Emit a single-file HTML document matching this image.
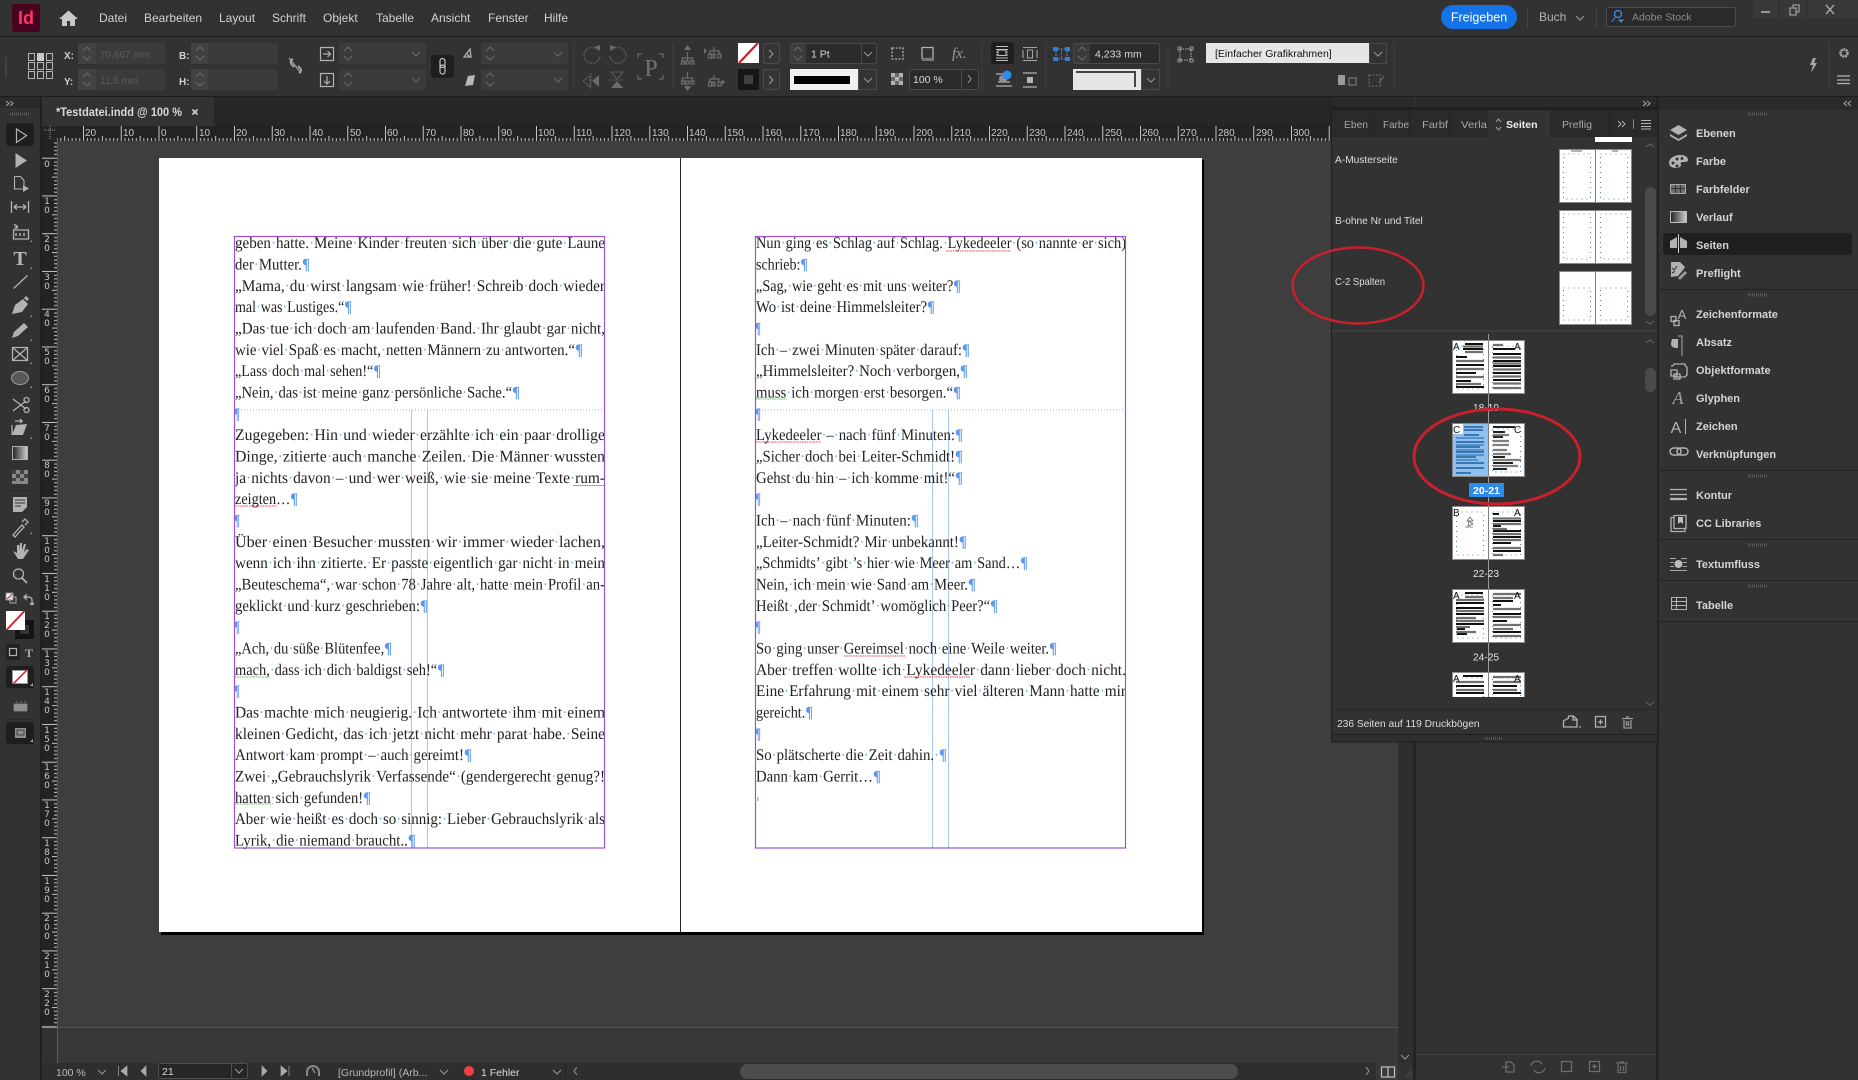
<!DOCTYPE html>
<html lang="de"><head><meta charset="utf-8"><title>InDesign</title>
<style>
html,body{margin:0;padding:0;background:#323232;overflow:hidden}
svg{display:block;font-family:"Liberation Sans",sans-serif}
.m{font-size:12px;fill:#d0d0d0}
.v{font-size:10.5px;fill:#d8d8d8}
.dim{font-size:10px;fill:#5c5c5c}
.lab{font-size:10px;fill:#cfcfcf;font-weight:bold}
.rh{font-size:10px;fill:#c8c8c8}
.rv{font-family:"DejaVu Sans",sans-serif;font-size:9px;fill:#c8c8c8;text-anchor:middle}
.dk{font-size:11px;font-weight:bold;fill:#d4d4d4}
.pn{font-size:10.2px;fill:#dedede}
.tb{font-size:10.5px;fill:#a8a8a8}
.tb.act{fill:#eee;font-weight:bold}
.tl{font-size:10.2px;fill:#e4e4e4;text-anchor:middle}
.bk{font-family:"Liberation Serif",serif;font-size:16.2px;fill:#222;text-rendering:geometricPrecision}
.d{fill:#7fb0e8}
.p{fill:#5b98ee;font-weight:bold}
.ic{fill:none;stroke:#b2b2b2;stroke-width:1.3}
.if{fill:#b2b2b2}
.di{fill:none;stroke:#666;stroke-width:1.2}
.cv{fill:none;stroke:#9a9a9a;stroke-width:1}
.ltr{font-family:"Liberation Sans",sans-serif;font-size:10px;fill:#111}
</style></head><body>
<svg xmlns="http://www.w3.org/2000/svg" width="1858" height="1080" viewBox="0 0 1858 1080">
<defs>
<path id="cv" class="cv" d="M0 0l4 4 4-4"/>
<path id="cu" class="di" d="M0 4l4-4 4 4"/>
<path id="cd" class="di" d="M0 0l4 4 4-4"/>
<pattern id="hr" patternUnits="userSpaceOnUse" x="158.5" y="126" width="37.75" height="15">
<path d="M.5 0v15M4.3 12v3M8 12v3M11.8 12v3M15.6 12v3M19.4 10v5M23.1 12v3M26.9 12v3M30.7 12v3M34.5 12v3" stroke="#c4c4c4" stroke-width="1" fill="none"/></pattern>
<pattern id="vr" patternUnits="userSpaceOnUse" x="42" y="157.7" width="15" height="37.75">
<path d="M0 .5h15M12 4.3h3M12 8h3M12 11.8h3M12 15.6h3M10 19.4h5M12 23.1h3M12 26.9h3M12 30.7h3M12 34.5h3" stroke="#c4c4c4" stroke-width="1" fill="none"/></pattern>
<g id="spr"><rect x=".5" y=".5" width="72" height="53" fill="#fff" stroke="#8a8a8a"/><path d="M36.5 0v54" stroke="#808080"/><path d="M4.5 6h27v43h-27zM40.5 6h28v43h-28z" fill="none" stroke="#5c88a8" stroke-dasharray="1 4"/></g>
<g id="mst"><rect x=".5" y=".5" width="72" height="53" fill="#fff" stroke="#8a8a8a"/><path d="M36.5 0v54" stroke="#808080"/></g>
</defs>

<rect width="1858" height="1080" fill="#323232"/>

<!-- menu bar -->
<rect x="0" y="36" width="1858" height="1" fill="#1d1d1d"/>
<rect x="12" y="4" width="28" height="28" rx="3" fill="#49021f"/>
<text x="18" y="24" style="font-size:18px;font-weight:bold;fill:#ff3366" textLength="16" lengthAdjust="spacingAndGlyphs">Id</text>
<path d="M68.5 10.5L59 19h3v7h5v-5h3v5h5v-7h3z" fill="#c8c8c8"/>
<text class="m" x="99" y="22">Datei</text><text class="m" x="144" y="22">Bearbeiten</text><text class="m" x="219" y="22">Layout</text><text class="m" x="272" y="22">Schrift</text><text class="m" x="323" y="22">Objekt</text><text class="m" x="376" y="22">Tabelle</text><text class="m" x="431" y="22">Ansicht</text><text class="m" x="488" y="22">Fenster</text><text class="m" x="544" y="22">Hilfe</text>
<rect x="1441" y="5" width="76" height="24" rx="12" fill="#1473e6"/>
<text x="1479" y="21.5" text-anchor="middle" style="font-size:12.5px;fill:#fff">Freigeben</text>
<rect x="1527" y="8" width="1" height="20" fill="#444"/>
<text class="m" x="1539" y="21" style="fill:#b4b4b4">Buch</text><use href="#cv" x="1576" y="16"/>
<rect x="1596" y="8" width="1" height="20" fill="#444"/>
<rect x="1606.5" y="7.5" width="129" height="19" rx="2" fill="#2a2a2a" stroke="#4c4c4c"/>
<circle cx="1618" cy="14" r="3.500" fill="none" stroke="#3d8fe8" stroke-width="1.300"/><path d="M1615.500 17l-4 5M1619 20h4l-2 2z" stroke="#3d8fe8" fill="#3d8fe8"/>
<text x="1632" y="20.5" style="font-size:10.5px;fill:#8a8a8a">Adobe Stock</text>
<rect x="1753" y="0" width="105" height="18" fill="#383838"/><path d="M1779 0v18M1807 0v18" stroke="#2e2e2e"/>
<rect x="1761" y="11" width="9" height="2" fill="#9a9a9a"/>
<path d="M1790 8h6v7h-6zM1793 8V5h6v7h-3" fill="none" stroke="#9a9a9a" stroke-width="1.3"/>
<path d="M1826 5l8 9M1834 5l-8 9" stroke="#a8a8a8" stroke-width="1.4"/>

<!-- control panel -->
<rect x="0" y="96" width="1858" height="1" fill="#1d1d1d"/>
<path d="M6 57v20" stroke="#555" stroke-width="2" stroke-dasharray="1 1.4"/>
<g fill="none" stroke="#b4b4b4" stroke-width="1"><path d="M28.5 53.5h6v7h-6zM37.5 53.5h6v7h-6zM46.5 53.5h6v7h-6zM28.5 62.5h6v7h-6zM37.5 62.5h6v7h-6zM46.5 62.5h6v7h-6zM28.5 71.5h6v7h-6zM37.5 71.5h6v7h-6zM46.5 71.5h6v7h-6z"/></g><rect x="37" y="53" width="7" height="8" fill="#c8c8c8"/>
<text class="lab" x="64" y="59">X:</text><text class="lab" x="64" y="85">Y:</text><text class="lab" x="179" y="59">B:</text><text class="lab" x="179" y="85">H:</text>
<g fill="#3b3b3b"><rect x="78" y="43" width="87" height="21" rx="2"/><rect x="78" y="69" width="87" height="21" rx="2"/><rect x="191" y="43" width="87" height="21" rx="2"/><rect x="191" y="69" width="87" height="21" rx="2"/><rect x="339" y="43" width="87" height="21" rx="2"/><rect x="339" y="69" width="87" height="21" rx="2"/><rect x="481" y="43" width="87" height="21" rx="2"/><rect x="481" y="69" width="87" height="21" rx="2"/></g>
<g fill="#424242"><rect x="78" y="43" width="18" height="21"/><rect x="78" y="69" width="18" height="21"/><rect x="191" y="43" width="17" height="21"/><rect x="191" y="69" width="17" height="21"/></g>
<use href="#cu" x="83" y="47"/><use href="#cd" x="83" y="56"/><use href="#cu" x="83" y="73"/><use href="#cd" x="83" y="82"/>
<use href="#cu" x="196" y="47"/><use href="#cd" x="196" y="56"/><use href="#cu" x="196" y="73"/><use href="#cd" x="196" y="82"/>
<use href="#cu" x="344" y="47"/><use href="#cd" x="344" y="56"/><use href="#cu" x="344" y="73"/><use href="#cd" x="344" y="82"/>
<use href="#cu" x="486" y="47"/><use href="#cd" x="486" y="56"/><use href="#cu" x="486" y="73"/><use href="#cd" x="486" y="82"/>
<use href="#cd" x="412" y="52"/><use href="#cd" x="412" y="78"/><use href="#cd" x="554" y="52"/><use href="#cd" x="554" y="78"/>
<text class="dim" x="100" y="58">70,667 mm</text><text class="dim" x="100" y="84">11,5 mm</text>
<path d="M289 58l12 15" stroke="#a8a8a8" stroke-width="1.200"/><path d="M293 59c-3 1-3 4-1 6l2 2M298 66l2 2c2 2 1 4-1 5" fill="none" stroke="#a8a8a8" stroke-width="1.800"/>
<path class="ic" d="M320.5 47.5h13v13h-13zM323 54h7M327.5 51l3 3-3 3" style="stroke-width:1.2"/><path class="ic" d="M320.5 73.5h13v13h-13zM327 76v7M324 81l3 3 3-3" style="stroke-width:1.2"/>
<rect x="431" y="55" width="23" height="23" rx="3" fill="#1e1e1e"/><rect x="440" y="58.500" width="5" height="9" rx="2.500" fill="none" stroke="#c4c4c4" stroke-width="1.200"/><rect x="440" y="65" width="5" height="9" rx="2.500" fill="none" stroke="#c4c4c4" stroke-width="1.200"/>
<path class="ic" d="M464 57l6-8 1 8zM467 54l3 3"/><path d="M465 86l3-10 7-1-2 10z" fill="#b8b8b8"/>
<path d="M574 43v46M673 43v46M982 43v46M1046 43v46M1168 43v46M1394 43v46M1829 42v48" stroke="#404040"/>
<g fill="none" stroke="#5a5a5a" stroke-width="1.500"><path d="M598 50a8 8 0 1 0 2 6" stroke-dasharray="2 1"/><path d="M612 50a8 8 0 1 1-2 6" stroke-dasharray="2 1"/></g>
<path d="M594 47l6-2v6zM616 47l-6-2v6z" fill="#6a6a6a"/>
<path d="M590 76l-7 5 7 6z" fill="none" stroke="#5a5a5a"/><path d="M592 81l7-6v12z" fill="#6a6a6a"/><path d="M591 73v16" stroke="#5a5a5a" stroke-dasharray="2 1"/>
<path d="M611 72h12l-6 7z" fill="none" stroke="#5a5a5a"/><path d="M611 88h12l-6-7z" fill="#6a6a6a"/><path d="M609 80h16" stroke="#5a5a5a" stroke-dasharray="2 1"/>
<text x="651" y="76" text-anchor="middle" style="font-family:'Liberation Serif',serif;font-size:24px;fill:#707070">P</text>
<path d="M638 58v-4h4M659 54h4v4M638 75v4h4M659 79h4v-4" fill="none" stroke="#777"/>
<g class="di" style="stroke:#6e6e6e"><path d="M687.5 52v6M687.5 58h-5v3M687.5 58h5v3M687.5 58v3M681.5 61h3v3h-3zM686 61h3v3h-3zM691 61h3v3h-3z"/><path d="M714 47v4M714 51h-4v3M714 51h5v3M708.500 54h3v4h-3zM713 54h2v4h-2zM718 54h3v4h-3z"/><path d="M687.500 72v6M687.500 78h-5v3M687.500 78h5v3M681.500 81h3v3h-3zM686 81h3v3h-3zM691 81h3v3h-3z"/><path d="M714 75v4M714 79h-4v3M714 79h5v3M708.500 82h3v4h-3zM713 82h2v4h-2zM718 82h3v4h-3z"/></g>
<path d="M684 50l3.500-5 3.500 5zM684 86l3.500 5 3.500-5z M707 51l-3-3v6zM722 79l3 3-3 3z" fill="#6e6e6e"/>
<rect x="738" y="43" width="21" height="20" fill="#fff"/><path d="M739 63l19-20" stroke="#d01c24" stroke-width="2.2"/>
<rect x="763.500" y="43.500" width="16" height="20" rx="2" fill="#353535" stroke="#4c4c4c"/><path d="M769 50l4 4-4 4" class="cv"/>
<rect x="738" y="69" width="21" height="21" fill="#161616"/><rect x="744" y="75" width="9" height="9" fill="#404040"/>
<rect x="763.500" y="69.500" width="16" height="20" rx="2" fill="#353535" stroke="#4c4c4c"/><path d="M769 76l4 4-4 4" class="cv"/>
<rect x="790.500" y="43.500" width="86" height="20" rx="2" fill="#2b2b2b" stroke="#4a4a4a"/><rect x="791" y="44" width="15" height="19" fill="#3c3c3c"/><use href="#cu" x="794" y="47" /><use href="#cd" x="794" y="56"/><text class="v" x="811" y="57.500">1 Pt</text><path d="M861.500 44v19" stroke="#4a4a4a"/><use href="#cv" x="864" y="52"/>
<rect x="790" y="69" width="68" height="21" fill="#f0f0f0"/><rect x="794" y="76" width="56" height="8" fill="#000"/><rect x="858.500" y="69.500" width="18" height="20" fill="#333" stroke="#4a4a4a"/><use href="#cv" x="864" y="78"/>
<g class="ic"><path d="M892 48h11v11h-11z" stroke-dasharray="2 1.500"/><path d="M922 47.500h11v11h-11z"/></g><rect x="922" y="58" width="12" height="3" fill="#777"/>
<text x="952" y="58" style="font-family:'Liberation Serif',serif;font-style:italic;font-size:15px;fill:#9a9a9a">fx.</text>
<rect x="891" y="73" width="12" height="12" fill="#666"/><path d="M891 73h4v4h-4zM899 73h4v4h-4zM895 77h4v4h-4zM891 81h4v4h-4zM899 81h4v4h-4z" fill="#b4b4b4"/>
<rect x="909.500" y="69.500" width="69" height="20" rx="2" fill="#2b2b2b" stroke="#4a4a4a"/><text class="v" x="913" y="83">100 %</text><path d="M961.500 70v19" stroke="#4a4a4a"/><path d="M968 75l3 4-3 4" class="cv"/>
<rect x="991" y="42" width="23" height="22" rx="3" fill="#1e1e1e"/>
<path d="M996 46.500h12M996 49.500h12M996 52h12M996 55h12M996 58h12M996 60.500h12" stroke="#c0c0c0"/><rect x="998" y="50" width="8" height="5.500" fill="#1e1e1e" stroke="#c0c0c0"/>
<path d="M1023 47.500h14M1023 60.500h14M1023 50v8M1037 50v8" stroke="#a4a4a4" stroke-width="1.100" fill="none"/><rect x="1027.500" y="50" width="5" height="8" fill="none" stroke="#a4a4a4"/>
<path d="M996 74h10M996 86h16M998 82h12" stroke="#b4b4b4" stroke-width="1.200"/><circle cx="1003" cy="79" r="4" fill="#909090"/><circle cx="1007" cy="75" r="4.500" fill="#2d8ceb"/>
<path d="M1023 73h14M1023 87h14" stroke="#b4b4b4" stroke-width="1.200"/><rect x="1027" y="77" width="6" height="6" fill="#b4b4b4"/>
<path d="M1061.500 50v8M1056 54h0" stroke="#2d7fd8" stroke-dasharray="2 1"/><path d="M1058 49h7M1058 59h7M1056 51v7M1067 51v7" stroke="#5f8fc4" stroke-dasharray="2 1" fill="none"/><path d="M1053 47h5v4h-5zM1065 47h5v4h-5zM1053 57h5v4h-5zM1065 57h5v4h-5z" fill="#2d7fd8"/>
<rect x="1073.500" y="43.500" width="86" height="20" rx="2" fill="#2b2b2b" stroke="#4a4a4a"/><rect x="1074" y="44" width="16" height="19" fill="#3a3a3a"/><use href="#cu" x="1078" y="47"/><use href="#cd" x="1078" y="56"/><text class="v" x="1095" y="57.500">4,233 mm</text>
<rect x="1073" y="69" width="68" height="21" fill="#e6e6e6"/><path d="M1076 72h59v15" fill="none" stroke="#444" stroke-width="2"/>
<rect x="1141.500" y="69.500" width="18" height="20" fill="#333" stroke="#4a4a4a"/><use href="#cv" x="1147" y="78"/>
<path d="M1180 49h11v11h-11z" fill="none" stroke="#b0b0b0" stroke-dasharray="1.500 1"/><path d="M1178 47h3v3h-3zM1190 47h3v3h-3zM1178 59h3v3h-3zM1190 59h3v3h-3z" fill="none" stroke="#b0b0b0" stroke-width=".8"/>
<rect x="1206" y="43" width="163" height="20" fill="#e6e6e6"/><text x="1215" y="57" style="font-size:10.5px;fill:#111">[Einfacher Grafikrahmen]</text>
<rect x="1369.500" y="43.500" width="17" height="20" fill="#333" stroke="#4a4a4a"/><use href="#cv" x="1374" y="52"/>
<path d="M1338 75h7v10h-7z" fill="#999"/><path d="M1349 78h7v7h-7z" class="di" style="stroke:#777"/><path d="M1369 75h11v11h-11z" class="di" stroke-dasharray="2 1.500"/><path d="M1384 76l-5 7" class="di"/>
<path d="M1813 58l-3 7h3l-2 8 6-10h-3l2-5z" fill="#a8a8a8"/>
<circle cx="1844" cy="53" r="3.500" fill="none" stroke="#aaa" stroke-width="2.500" stroke-dasharray="2 .6"/>
<path d="M1837 76h13M1837 80h13M1837 83.500h13" stroke="#b4b4b4" stroke-width="1.300"/>

<!-- strips -->
<rect x="42" y="97" width="1373" height="29" fill="#262626"/>
<rect x="1332" y="97" width="526" height="13" fill="#2a2a2a"/>
<rect x="1332" y="107" width="326" height="3" fill="#1f1f1f"/>
<path d="M1414.500 97v10" stroke="#3a3a3a"/>
<rect x="42" y="97" width="172" height="29" fill="#323232"/>
<text x="56" y="116" textLength="126" lengthAdjust="spacingAndGlyphs" style="font-size:11.500px;font-weight:bold;fill:#d8d8d8">*Testdatei.indd @ 100 %</text>
<path d="M192.500 109.500l5 5M197.500 109.500l-5 5" stroke="#d0d0d0" stroke-width="1.600"/>
<path d="M1643 101l3 2.500-3 2.500M1647 101l3 2.500-3 2.500M1851 101l-3 2.500 3 2.500M1847 101l-3 2.500 3 2.500" fill="none" stroke="#a8a8a8"/>
<rect x="0" y="97" width="40" height="11" fill="#2a2a2a"/>
<path d="M6 101l3 2.500-3 2.500M10 101l3 2.500-3 2.500" fill="none" stroke="#a8a8a8"/>
<rect x="40" y="97" width="2" height="983" fill="#212121"/>
<path d="M10 114h20" stroke="#5a5a5a" stroke-width="3" stroke-dasharray="1 1"/>

<!-- pasteboard -->
<rect x="57" y="141" width="1341" height="886" fill="#3e3e3e"/>
<rect x="57" y="1027" width="1341" height="36" fill="#383838"/>
<rect x="57" y="1027" width="1341" height="1" fill="#535353"/>
<rect x="42" y="141" width="15" height="886" fill="#232323"/>
<rect x="42" y="141" width="15" height="886" fill="url(#vr)"/>
<rect x="42" y="1026" width="15" height="2" fill="#8a8a8a"/>
<rect x="57" y="141" width="1" height="922" fill="#5a5a5a"/>
<rect x="42" y="126" width="1290" height="15" fill="#232323"/>
<rect x="57" y="126" width="1275" height="15" fill="url(#hr)"/>
<path d="M44 130h11M50 126v14" stroke="#999" stroke-dasharray="1 1"/>
<g class="rh">
<text x="85" y="136">20</text><text x="123" y="136">10</text><text x="161" y="136">0</text><text x="199" y="136">10</text><text x="236" y="136">20</text><text x="274" y="136">30</text><text x="312" y="136">40</text><text x="350" y="136">50</text><text x="387" y="136">60</text><text x="425" y="136">70</text><text x="463" y="136">80</text><text x="501" y="136">90</text><text x="538" y="136">100</text><text x="576" y="136">110</text><text x="614" y="136">120</text><text x="652" y="136">130</text><text x="689" y="136">140</text><text x="727" y="136">150</text><text x="765" y="136">160</text><text x="803" y="136">170</text><text x="840" y="136">180</text><text x="878" y="136">190</text><text x="916" y="136">200</text><text x="954" y="136">210</text><text x="991" y="136">220</text><text x="1029" y="136">230</text><text x="1067" y="136">240</text><text x="1105" y="136">250</text><text x="1142" y="136">260</text><text x="1180" y="136">270</text><text x="1218" y="136">280</text><text x="1256" y="136">290</text><text x="1293" y="136">300</text>
</g>
<g class="rv">
<text x="47" y="167">0</text>
<text x="47 47" dy="0 9" y="204">10</text><text x="47 47" dy="0 9" y="242">20</text><text x="47 47" dy="0 9" y="280">30</text><text x="47 47" dy="0 9" y="317">40</text><text x="47 47" dy="0 9" y="355">50</text><text x="47 47" dy="0 9" y="393">60</text><text x="47 47" dy="0 9" y="431">70</text><text x="47 47" dy="0 9" y="468">80</text><text x="47 47" dy="0 9" y="506">90</text>
<text x="47 47 47" dy="0 9 9" y="544">100</text><text x="47 47 47" dy="0 9 9" y="582">110</text><text x="47 47 47" dy="0 9 9" y="619">120</text><text x="47 47 47" dy="0 9 9" y="657">130</text><text x="47 47 47" dy="0 9 9" y="695">140</text><text x="47 47 47" dy="0 9 9" y="733">150</text><text x="47 47 47" dy="0 9 9" y="770">160</text><text x="47 47 47" dy="0 9 9" y="808">170</text><text x="47 47 47" dy="0 9 9" y="846">180</text><text x="47 47 47" dy="0 9 9" y="884">190</text><text x="47 47 47" dy="0 9 9" y="921">200</text><text x="47 47 47" dy="0 9 9" y="959">210</text><text x="47 47 47" dy="0 9 9" y="997">220</text>
</g>

<!-- page -->
<rect x="161" y="160" width="1043" height="775" fill="#000"/>
<rect x="159" y="158" width="1043" height="774" fill="#fff"/>
<rect x="680" y="158" width="1" height="774" fill="#222"/>

<!-- guides -->
<path d="M235 410h370M756 410h370" stroke="#8cb0d8" stroke-dasharray="1 2"/>
<path d="M411.500 410v438M427.500 410v438M932.500 410v438M948.500 410v438" stroke="#a8c8ee"/>

<!-- left column -->
<g class="bk" transform="translate(0,.7)">
<text x="235" y="247.500" textLength="370" lengthAdjust="spacingAndGlyphs">geben<tspan class="d">·</tspan>hatte.<tspan class="d">·</tspan>Meine<tspan class="d">·</tspan>Kinder<tspan class="d">·</tspan>freuten<tspan class="d">·</tspan>sich<tspan class="d">·</tspan>über<tspan class="d">·</tspan>die<tspan class="d">·</tspan>gute<tspan class="d">·</tspan>Laune</text>
<text x="235" y="268.800" textLength="75" lengthAdjust="spacingAndGlyphs">der<tspan class="d">·</tspan>Mutter.<tspan class="p">¶</tspan></text>
<text x="235" y="290.200" textLength="370" lengthAdjust="spacingAndGlyphs">„Mama,<tspan class="d">·</tspan>du<tspan class="d">·</tspan>wirst<tspan class="d">·</tspan>langsam<tspan class="d">·</tspan>wie<tspan class="d">·</tspan>früher!<tspan class="d">·</tspan>Schreib<tspan class="d">·</tspan>doch<tspan class="d">·</tspan>wieder</text>
<text x="235" y="311.500" textLength="117" lengthAdjust="spacingAndGlyphs">mal<tspan class="d">·</tspan>was<tspan class="d">·</tspan>Lustiges.“<tspan class="p">¶</tspan></text>
<text x="235" y="332.800" textLength="370" lengthAdjust="spacingAndGlyphs">„Das<tspan class="d">·</tspan>tue<tspan class="d">·</tspan>ich<tspan class="d">·</tspan>doch<tspan class="d">·</tspan>am<tspan class="d">·</tspan>laufenden<tspan class="d">·</tspan>Band.<tspan class="d">·</tspan>Ihr<tspan class="d">·</tspan>glaubt<tspan class="d">·</tspan>gar<tspan class="d">·</tspan>nicht,</text>
<text x="235" y="354.200" textLength="348" lengthAdjust="spacingAndGlyphs">wie<tspan class="d">·</tspan>viel<tspan class="d">·</tspan>Spaß<tspan class="d">·</tspan>es<tspan class="d">·</tspan>macht,<tspan class="d">·</tspan>netten<tspan class="d">·</tspan>Männern<tspan class="d">·</tspan>zu<tspan class="d">·</tspan>antworten.“<tspan class="p">¶</tspan></text>
<text x="235" y="375.500" textLength="146" lengthAdjust="spacingAndGlyphs">„Lass<tspan class="d">·</tspan>doch<tspan class="d">·</tspan>mal<tspan class="d">·</tspan>sehen!“<tspan class="p">¶</tspan></text>
<text x="235" y="396.800" textLength="285" lengthAdjust="spacingAndGlyphs">„Nein,<tspan class="d">·</tspan>das<tspan class="d">·</tspan>ist<tspan class="d">·</tspan>meine<tspan class="d">·</tspan>ganz<tspan class="d">·</tspan>persönliche<tspan class="d">·</tspan>Sache.“<tspan class="p">¶</tspan></text>
<text x="234" y="418.200" textLength="6" lengthAdjust="spacingAndGlyphs"><tspan class="p">¶</tspan></text>
<text x="235" y="439.500" textLength="370" lengthAdjust="spacingAndGlyphs">Zugegeben:<tspan class="d">·</tspan>Hin<tspan class="d">·</tspan>und<tspan class="d">·</tspan>wieder<tspan class="d">·</tspan>erzählte<tspan class="d">·</tspan>ich<tspan class="d">·</tspan>ein<tspan class="d">·</tspan>paar<tspan class="d">·</tspan>drollige</text>
<text x="235" y="460.800" textLength="370" lengthAdjust="spacingAndGlyphs">Dinge,<tspan class="d">·</tspan>zitierte<tspan class="d">·</tspan>auch<tspan class="d">·</tspan>manche<tspan class="d">·</tspan>Zeilen.<tspan class="d">·</tspan>Die<tspan class="d">·</tspan>Männer<tspan class="d">·</tspan>wussten</text>
<text x="235" y="482.100" textLength="370" lengthAdjust="spacingAndGlyphs">ja<tspan class="d">·</tspan>nichts<tspan class="d">·</tspan>davon<tspan class="d">·</tspan>–<tspan class="d">·</tspan>und<tspan class="d">·</tspan>wer<tspan class="d">·</tspan>weiß,<tspan class="d">·</tspan>wie<tspan class="d">·</tspan>sie<tspan class="d">·</tspan>meine<tspan class="d">·</tspan>Texte<tspan class="d">·</tspan>rum-</text>
<text x="235" y="503.500" textLength="63" lengthAdjust="spacingAndGlyphs">zeigten…<tspan class="p">¶</tspan></text>
<text x="234" y="524.800" textLength="6" lengthAdjust="spacingAndGlyphs"><tspan class="p">¶</tspan></text>
<text x="235" y="546.100" textLength="370" lengthAdjust="spacingAndGlyphs">Über<tspan class="d">·</tspan>einen<tspan class="d">·</tspan>Besucher<tspan class="d">·</tspan>mussten<tspan class="d">·</tspan>wir<tspan class="d">·</tspan>immer<tspan class="d">·</tspan>wieder<tspan class="d">·</tspan>lachen,</text>
<text x="235" y="567.500" textLength="370" lengthAdjust="spacingAndGlyphs">wenn<tspan class="d">·</tspan>ich<tspan class="d">·</tspan>ihn<tspan class="d">·</tspan>zitierte.<tspan class="d">·</tspan>Er<tspan class="d">·</tspan>passte<tspan class="d">·</tspan>eigentlich<tspan class="d">·</tspan>gar<tspan class="d">·</tspan>nicht<tspan class="d">·</tspan>in<tspan class="d">·</tspan>mein</text>
<text x="235" y="588.800" textLength="370" lengthAdjust="spacingAndGlyphs">„Beuteschema“,<tspan class="d">·</tspan>war<tspan class="d">·</tspan>schon<tspan class="d">·</tspan>78<tspan class="d">·</tspan>Jahre<tspan class="d">·</tspan>alt,<tspan class="d">·</tspan>hatte<tspan class="d">·</tspan>mein<tspan class="d">·</tspan>Profil<tspan class="d">·</tspan>an-</text>
<text x="235" y="610.100" textLength="193" lengthAdjust="spacingAndGlyphs">geklickt<tspan class="d">·</tspan>und<tspan class="d">·</tspan>kurz<tspan class="d">·</tspan>geschrieben:<tspan class="p">¶</tspan></text>
<text x="234" y="631.500" textLength="6" lengthAdjust="spacingAndGlyphs"><tspan class="p">¶</tspan></text>
<text x="235" y="652.800" textLength="157" lengthAdjust="spacingAndGlyphs">„Ach,<tspan class="d">·</tspan>du<tspan class="d">·</tspan>süße<tspan class="d">·</tspan>Blütenfee,<tspan class="p">¶</tspan></text>
<text x="235" y="674.100" textLength="210" lengthAdjust="spacingAndGlyphs">mach,<tspan class="d">·</tspan>dass<tspan class="d">·</tspan>ich<tspan class="d">·</tspan>dich<tspan class="d">·</tspan>baldigst<tspan class="d">·</tspan>seh!“<tspan class="p">¶</tspan></text>
<text x="234" y="695.400" textLength="6" lengthAdjust="spacingAndGlyphs"><tspan class="p">¶</tspan></text>
<text x="235" y="716.800" textLength="370" lengthAdjust="spacingAndGlyphs">Das<tspan class="d">·</tspan>machte<tspan class="d">·</tspan>mich<tspan class="d">·</tspan>neugierig.<tspan class="d">·</tspan>Ich<tspan class="d">·</tspan>antwortete<tspan class="d">·</tspan>ihm<tspan class="d">·</tspan>mit<tspan class="d">·</tspan>einem</text>
<text x="235" y="738.100" textLength="370" lengthAdjust="spacingAndGlyphs">kleinen<tspan class="d">·</tspan>Gedicht,<tspan class="d">·</tspan>das<tspan class="d">·</tspan>ich<tspan class="d">·</tspan>jetzt<tspan class="d">·</tspan>nicht<tspan class="d">·</tspan>mehr<tspan class="d">·</tspan>parat<tspan class="d">·</tspan>habe.<tspan class="d">·</tspan>Seine</text>
<text x="235" y="759.400" textLength="237" lengthAdjust="spacingAndGlyphs">Antwort<tspan class="d">·</tspan>kam<tspan class="d">·</tspan>prompt<tspan class="d">·</tspan>–<tspan class="d">·</tspan>auch<tspan class="d">·</tspan>gereimt!<tspan class="p">¶</tspan></text>
<text x="235" y="780.800" textLength="370" lengthAdjust="spacingAndGlyphs">Zwei<tspan class="d">·</tspan>„Gebrauchslyrik<tspan class="d">·</tspan>Verfassende“<tspan class="d">·</tspan>(gendergerecht<tspan class="d">·</tspan>genug?!</text>
<text x="235" y="802.100" textLength="136" lengthAdjust="spacingAndGlyphs">hatten<tspan class="d">·</tspan>sich<tspan class="d">·</tspan>gefunden!<tspan class="p">¶</tspan></text>
<text x="235" y="823.400" textLength="370" lengthAdjust="spacingAndGlyphs">Aber<tspan class="d">·</tspan>wie<tspan class="d">·</tspan>heißt<tspan class="d">·</tspan>es<tspan class="d">·</tspan>doch<tspan class="d">·</tspan>so<tspan class="d">·</tspan>sinnig:<tspan class="d">·</tspan>Lieber<tspan class="d">·</tspan>Gebrauchslyrik<tspan class="d">·</tspan>als</text>
<text x="235" y="844.700" textLength="181" lengthAdjust="spacingAndGlyphs">Lyrik,<tspan class="d">·</tspan>die<tspan class="d">·</tspan>niemand<tspan class="d">·</tspan>braucht..<tspan class="p">¶</tspan></text>
</g>

<!-- right column -->
<g class="bk" transform="translate(0,.7)">
<text x="756" y="247.500" textLength="370" lengthAdjust="spacingAndGlyphs">Nun<tspan class="d">·</tspan>ging<tspan class="d">·</tspan>es<tspan class="d">·</tspan>Schlag<tspan class="d">·</tspan>auf<tspan class="d">·</tspan>Schlag.<tspan class="d">·</tspan>Lykedeeler<tspan class="d">·</tspan>(so<tspan class="d">·</tspan>nannte<tspan class="d">·</tspan>er<tspan class="d">·</tspan>sich)</text>
<text x="756" y="268.800" textLength="52" lengthAdjust="spacingAndGlyphs">schrieb:<tspan class="p">¶</tspan></text>
<text x="756" y="290.200" textLength="205" lengthAdjust="spacingAndGlyphs">„Sag,<tspan class="d">·</tspan>wie<tspan class="d">·</tspan>geht<tspan class="d">·</tspan>es<tspan class="d">·</tspan>mit<tspan class="d">·</tspan>uns<tspan class="d">·</tspan>weiter?<tspan class="p">¶</tspan></text>
<text x="756" y="311.500" textLength="179" lengthAdjust="spacingAndGlyphs">Wo<tspan class="d">·</tspan>ist<tspan class="d">·</tspan>deine<tspan class="d">·</tspan>Himmelsleiter?<tspan class="p">¶</tspan></text>
<text x="755" y="332.800" textLength="6" lengthAdjust="spacingAndGlyphs"><tspan class="p">¶</tspan></text>
<text x="756" y="354.200" textLength="214" lengthAdjust="spacingAndGlyphs">Ich<tspan class="d">·</tspan>–<tspan class="d">·</tspan>zwei<tspan class="d">·</tspan>Minuten<tspan class="d">·</tspan>später<tspan class="d">·</tspan>darauf:<tspan class="p">¶</tspan></text>
<text x="756" y="375.500" textLength="212" lengthAdjust="spacingAndGlyphs">„Himmelsleiter?<tspan class="d">·</tspan>Noch<tspan class="d">·</tspan>verborgen,<tspan class="p">¶</tspan></text>
<text x="756" y="396.800" textLength="205" lengthAdjust="spacingAndGlyphs">muss<tspan class="d">·</tspan>ich<tspan class="d">·</tspan>morgen<tspan class="d">·</tspan>erst<tspan class="d">·</tspan>besorgen.“<tspan class="p">¶</tspan></text>
<text x="755" y="418.200" textLength="6" lengthAdjust="spacingAndGlyphs"><tspan class="p">¶</tspan></text>
<text x="756" y="439.500" textLength="207" lengthAdjust="spacingAndGlyphs">Lykedeeler<tspan class="d">·</tspan>–<tspan class="d">·</tspan>nach<tspan class="d">·</tspan>fünf<tspan class="d">·</tspan>Minuten:<tspan class="p">¶</tspan></text>
<text x="756" y="460.800" textLength="207" lengthAdjust="spacingAndGlyphs">„Sicher<tspan class="d">·</tspan>doch<tspan class="d">·</tspan>bei<tspan class="d">·</tspan>Leiter-Schmidt!<tspan class="p">¶</tspan></text>
<text x="756" y="482.100" textLength="207" lengthAdjust="spacingAndGlyphs">Gehst<tspan class="d">·</tspan>du<tspan class="d">·</tspan>hin<tspan class="d">·</tspan>–<tspan class="d">·</tspan>ich<tspan class="d">·</tspan>komme<tspan class="d">·</tspan>mit!“<tspan class="p">¶</tspan></text>
<text x="755" y="503.500" textLength="6" lengthAdjust="spacingAndGlyphs"><tspan class="p">¶</tspan></text>
<text x="756" y="524.800" textLength="163" lengthAdjust="spacingAndGlyphs">Ich<tspan class="d">·</tspan>–<tspan class="d">·</tspan>nach<tspan class="d">·</tspan>fünf<tspan class="d">·</tspan>Minuten:<tspan class="p">¶</tspan></text>
<text x="756" y="546.100" textLength="211" lengthAdjust="spacingAndGlyphs">„Leiter-Schmidt?<tspan class="d">·</tspan>Mir<tspan class="d">·</tspan>unbekannt!<tspan class="p">¶</tspan></text>
<text x="756" y="567.500" textLength="272" lengthAdjust="spacingAndGlyphs">„Schmidts’<tspan class="d">·</tspan>gibt<tspan class="d">·</tspan>’s<tspan class="d">·</tspan>hier<tspan class="d">·</tspan>wie<tspan class="d">·</tspan>Meer<tspan class="d">·</tspan>am<tspan class="d">·</tspan>Sand…<tspan class="p">¶</tspan></text>
<text x="756" y="588.800" textLength="220" lengthAdjust="spacingAndGlyphs">Nein,<tspan class="d">·</tspan>ich<tspan class="d">·</tspan>mein<tspan class="d">·</tspan>wie<tspan class="d">·</tspan>Sand<tspan class="d">·</tspan>am<tspan class="d">·</tspan>Meer.<tspan class="p">¶</tspan></text>
<text x="756" y="610.100" textLength="242" lengthAdjust="spacingAndGlyphs">Heißt<tspan class="d">·</tspan>‚der<tspan class="d">·</tspan>Schmidt’<tspan class="d">·</tspan>womöglich<tspan class="d">·</tspan>Peer?“<tspan class="p">¶</tspan></text>
<text x="755" y="631.500" textLength="6" lengthAdjust="spacingAndGlyphs"><tspan class="p">¶</tspan></text>
<text x="756" y="652.800" textLength="301" lengthAdjust="spacingAndGlyphs">So<tspan class="d">·</tspan>ging<tspan class="d">·</tspan>unser<tspan class="d">·</tspan>Gereimsel<tspan class="d">·</tspan>noch<tspan class="d">·</tspan>eine<tspan class="d">·</tspan>Weile<tspan class="d">·</tspan>weiter.<tspan class="p">¶</tspan></text>
<text x="756" y="674.100" textLength="370" lengthAdjust="spacingAndGlyphs">Aber<tspan class="d">·</tspan>treffen<tspan class="d">·</tspan>wollte<tspan class="d">·</tspan>ich<tspan class="d">·</tspan>Lykedeeler<tspan class="d">·</tspan>dann<tspan class="d">·</tspan>lieber<tspan class="d">·</tspan>doch<tspan class="d">·</tspan>nicht.</text>
<text x="756" y="695.400" textLength="370" lengthAdjust="spacingAndGlyphs">Eine<tspan class="d">·</tspan>Erfahrung<tspan class="d">·</tspan>mit<tspan class="d">·</tspan>einem<tspan class="d">·</tspan>sehr<tspan class="d">·</tspan>viel<tspan class="d">·</tspan>älteren<tspan class="d">·</tspan>Mann<tspan class="d">·</tspan>hatte<tspan class="d">·</tspan>mir</text>
<text x="756" y="716.800" textLength="57" lengthAdjust="spacingAndGlyphs">gereicht.<tspan class="p">¶</tspan></text>
<text x="755" y="738.100" textLength="6" lengthAdjust="spacingAndGlyphs"><tspan class="p">¶</tspan></text>
<text x="756" y="759.400" textLength="191" lengthAdjust="spacingAndGlyphs">So<tspan class="d">·</tspan>plätscherte<tspan class="d">·</tspan>die<tspan class="d">·</tspan>Zeit<tspan class="d">·</tspan>dahin.<tspan class="d">·</tspan><tspan class="p">¶</tspan></text>
<text x="756" y="780.800" textLength="125" lengthAdjust="spacingAndGlyphs">Dann<tspan class="d">·</tspan>kam<tspan class="d">·</tspan>Gerrit…<tspan class="p">¶</tspan></text>
</g>
<rect x="757" y="797" width="1.500" height="4" fill="#8fb8ee"/>

<!-- squiggles -->
<g fill="none" stroke-width="1" stroke-dasharray="1.500 .8">
<path stroke="#e04848" d="M946 251h65M756 442h65M573 485.500h32M235 506h42M844 656h61M904 677h66"/>
<path stroke="#5cc05c" d="M756 399h31M235 677h35M235 804h38"/>
</g>

<!-- frames -->
<rect x="234.500" y="236.500" width="370" height="611.500" fill="none" stroke="#a052cc" stroke-width="1.200"/>
<rect x="755.500" y="236.500" width="370" height="611.500" fill="none" stroke="#a052cc" stroke-width="1.200"/>

<!-- lower-right filler -->
<rect x="1398" y="141" width="15" height="922" fill="#2e2e2e"/>
<rect x="1413" y="126" width="3" height="954" fill="#232323"/>
<rect x="1416" y="742" width="240" height="338" fill="#323232"/>
<rect x="1416" y="1054" width="240" height="1" fill="#454545"/>
<rect x="1656" y="97" width="3" height="983" fill="#232323"/>
<use href="#cv" x="1401" y="1055"/>
<g class="di" style="stroke:#6e6e6e"><path d="M1506 1072v-10h5l3 3v7zM1502 1067h7"/><path d="M1531 1066a6 6 0 0 1 11-2M1545 1068a6 6 0 0 1-11 2"/><path d="M1561.500 1061.500h10v10h-10z"/><path d="M1589.500 1061.500h10v10h-10zM1592 1066.500h5M1594.500 1064v5"/><path d="M1618 1064v8.500h8V1064M1616 1063h12M1620 1062h4M1620.500 1066v5M1623.500 1066v5"/></g>

<!-- status bar -->
<rect x="42" y="1063" width="1356" height="17" fill="#2e2e2e"/>
<text class="v" x="56" y="1076" style="fill:#bbb">100 %</text><use href="#cv" x="98" y="1070"/>
<path d="M118.500 1066v10M127 1066l-6 5 6 5zM146 1066l-5 5 5 5z" fill="#a8a8a8" stroke="#a8a8a8" stroke-width=".7"/>
<rect x="158.500" y="1063.500" width="89" height="15" rx="2" fill="#262626" stroke="#4e4e4e"/><path d="M231.500 1064v14" stroke="#4e4e4e"/>
<text class="v" x="162" y="1075">21</text><use href="#cv" x="235" y="1069"/>
<path d="M262 1066l5 5-5 5zM281 1066l6 5-6 5zM289 1066v10" fill="#a8a8a8" stroke="#a8a8a8" stroke-width=".7"/>
<path d="M307 1076v-4a6 6 0 0 1 12 0v4" fill="none" stroke="#888" stroke-width="2"/><path d="M312 1068l3 5" stroke="#aaa"/>
<text class="v" x="338" y="1076" style="fill:#b8b8b8">[Grundprofil] (Arb...</text><use href="#cv" x="440" y="1070"/>
<circle cx="469" cy="1071" r="5" fill="#f04040"/><text class="v" x="481" y="1076" style="fill:#ddd">1 Fehler</text><use href="#cv" x="553" y="1070"/>
<rect x="565" y="1063" width="1" height="17" fill="#262626"/><path d="M577 1067l-3 4 3 4" class="cv"/>
<rect x="740" y="1064" width="498" height="15" rx="7.500" fill="#4d4d4d"/>
<path d="M1366 1067l3 4-3 4" class="cv"/>
<rect x="1376" y="1063" width="22" height="17" fill="#3a3a3a"/>
<path d="M1381.500 1067h13v10h-13zM1388 1067v10" fill="none" stroke="#bdbdbd" stroke-width="1.300"/>
<path d="M1411 1070v8M1408 1073v5M1405 1076v2" stroke="#666" stroke-dasharray="1 1"/>

<!-- toolbar -->
<rect x="6" y="123" width="28" height="23" rx="3" fill="#1e1e1e"/>
<path class="ic" d="M16.500 129v13.500l10-7z" style="stroke-width:1.200"/>
<path class="if" d="M15.500 153v15l11.500-7.500z"/>
<path class="ic" d="M14.500 176.500h6l3.500 4v5M14.500 176.500v12.500h8" style="stroke-width:1.100"/><path class="if" d="M23 185l6 3.500-6 3.500z"/>
<path class="ic" d="M11.500 201v12M28.500 201v12M14 207h12M14 207l3-2.500M14 207l3 2.500M26 207l-3-2.500M26 207l-3 2.500"/>
<path class="ic" d="M13.500 230h15v9h-15zM14 224l4 4M17 225v3h-3"/><path d="M16 233v3M20 233v3M24 233v3" stroke="#b2b2b2" stroke-width="1.500"/>
<rect x="3" y="244" width="34" height="1" fill="#2a2a2a"/><rect x="3" y="392" width="34" height="1" fill="#2a2a2a"/><rect x="3" y="490" width="34" height="1" fill="#2a2a2a"/><rect x="3" y="719" width="34" height="1" fill="#2a2a2a"/>
<text x="20" y="265" text-anchor="middle" style="font-family:'Liberation Serif',serif;font-size:20px;font-weight:bold;fill:#b8b8b8">T</text>
<path class="ic" d="M13.500 288.500l14-13"/>
<path class="if" d="M12 314l3-9 8-6 5 5-6 8zM24 298l2-2 3 3-2 2z"/>
<path class="if" d="M12 338l2-6 10-9 4 4-10 9z"/>
<path class="ic" d="M12.500 347.500h15v13h-15zM12.500 347.500l15 13M27.500 347.500l-15 13"/>
<ellipse cx="20" cy="378" rx="8.500" ry="6.500" fill="#585858" stroke="#a0a0a0"/>
<path class="ic" d="M13 399l13 10M13 411l13-10"/><circle cx="26.500" cy="400" r="2.500" class="ic"/><circle cx="26.500" cy="410" r="2.500" class="ic"/>
<path class="if" d="M16 425l11-1-4 11H12z"/><path d="M12 425v10M15 421h7l-2-2M22 421l-2 2" class="ic"/>
<defs><linearGradient id="gr"><stop offset="0" stop-color="#222"/><stop offset="1" stop-color="#d0d0d0"/></linearGradient></defs>
<rect x="12.500" y="446.500" width="15" height="13" fill="url(#gr)" stroke="#b0b0b0"/>
<rect x="12" y="470" width="16" height="14" fill="#888"/><path d="M12 470h4v4h-4zM20 470h4v4h-4zM16 474h4v4h-4zM24 474h4v4h-4zM12 478h4v3h-4zM20 478h4v3h-4z" fill="#444"/>
<path class="if" d="M13 497h14v10l-5 5H13z"/><path d="M15 500h10M15 503h10M15 506h6" stroke="#323232"/>
<path class="ic" d="M13 535l9-10 2 2-9 10zM22 522l3-3 3 3-3 3"/>
<path class="if" d="M13 551l4 2v-8h2v5l1-7h2v7l2-6h2l-2 8 3-3 2 1-6 9h-5z"/>
<circle cx="18.500" cy="574" r="5" class="ic"/><path d="M22 578l5 5" stroke="#b2b2b2" stroke-width="1.800"/>
<path d="M32 240l-2 2h2zM32 267l-2 2h2zM32 315l-2 2h2zM32 339l-2 2h2zM32 362l-2 2h2zM32 386l-2 2h2zM32 437l-2 2h2zM32 532l-2 2h2z" fill="#999"/>
<rect x="6" y="593" width="7" height="7" fill="#fff" stroke="#888"/><path d="M7 599l5-5" stroke="#c22" /><rect x="10" y="597" width="6" height="6" fill="none" stroke="#aaa"/>
<path class="ic" d="M26 597h3a3 3 0 0 1 3 3v4M24 597l2-2v4zM30 603l2 2 2-2"/>
<rect x="15" y="620" width="19" height="19" fill="#141414"/><rect x="20" y="625" width="9" height="9" fill="#333"/>
<rect x="6" y="611" width="19" height="19" fill="#fff"/><path d="M6.500 630l18-19" stroke="#d01c24" stroke-width="1.800"/>
<rect x="6" y="644" width="14" height="16" rx="2" fill="#222"/><rect x="9.500" y="648.500" width="7" height="7" fill="none" stroke="#b0b0b0" stroke-width="1.200"/>
<text x="29" y="657" text-anchor="middle" style="font-family:'Liberation Serif',serif;font-size:12px;font-weight:bold;fill:#a8a8a8">T</text>
<rect x="6" y="666" width="28" height="22" rx="3" fill="#1e1e1e"/><rect x="12.500" y="670.500" width="15" height="13" fill="#fff" stroke="#999"/><path d="M13 684l14-14" stroke="#d01c24" stroke-width="1.500"/><path d="M33 686l-3 0 3-3z" fill="#aaa"/>
<path d="M14 704h13v7H14zM17 701v2M21 701v2M25 701v2" fill="#8e8e8e" stroke="#8e8e8e" stroke-width=".7"/>
<rect x="6" y="722" width="28" height="22" rx="3" fill="#1e1e1e"/><rect x="15" y="728" width="11" height="10" fill="#8e8e8e"/><rect x="17" y="730" width="7" height="5" fill="none" stroke="#444"/><path d="M33 742l-3 0 3-3z" fill="#aaa"/>

<!-- pages panel -->
<rect x="1332" y="110" width="325" height="624" fill="#323232"/>
<rect x="1332" y="110" width="325" height="27" fill="#2a2a2a"/>
<rect x="1332" y="734" width="325" height="8" fill="#2e2e2e"/>
<path d="M1332 734.500h325M1332 742h325" stroke="#1f1f1f"/>
<rect x="1331" y="107" width="1" height="635" fill="#1f1f1f"/>
<path d="M1485 738.500h18" stroke="#555" stroke-width="3" stroke-dasharray="1 1"/>
<rect x="1488" y="110" width="62" height="27" fill="#323232"/>
<path d="M1371.500 110v27M1410.500 110v27M1449.500 110v27M1609.500 110v27" stroke="#262626"/>
<text class="tb" x="1344" y="128" textLength="24" lengthAdjust="spacingAndGlyphs">Eben</text><text class="tb" x="1383" y="128" textLength="26" lengthAdjust="spacingAndGlyphs">Farbe</text><text class="tb" x="1422" y="128" textLength="26" lengthAdjust="spacingAndGlyphs">Farbf</text><text class="tb" x="1461" y="128" textLength="26" lengthAdjust="spacingAndGlyphs">Verla</text>
<path d="M1496 122l2.500-3 2.500 3M1496 127l2.500 3 2.500-3" fill="none" stroke="#a0a0a0"/>
<text class="tb act" x="1506" y="128">Seiten</text><text class="tb" x="1562" y="128" textLength="30" lengthAdjust="spacingAndGlyphs">Preflig</text>
<path d="M1618 121l3 3-3 3M1622 121l3 3-3 3" fill="none" stroke="#b4b4b4"/><path d="M1633.500 119v10" stroke="#888"/>
<path d="M1641 120.500h10M1641 123.500h10M1641 126.500h10M1641 129h10" stroke="#b4b4b4"/>
<rect x="1595" y="137" width="37" height="5" fill="#fff"/>
<text class="pn" x="1335" y="163">A-Musterseite</text><text class="pn" x="1335" y="224">B-ohne Nr und Titel</text><text class="pn" x="1335" y="285" textLength="50" lengthAdjust="spacingAndGlyphs">C-2 Spalten</text>
<use href="#mst" x="1559" y="149"/><path d="M1563.500 154h27v45h-27zM1600.500 154h27v45h-27z" fill="none" stroke="#5c88a8" stroke-dasharray="1 4"/><path d="M1571 151h11M1612 151h6" stroke="#999" stroke-width="1.500"/>
<use href="#mst" x="1559" y="210"/><path d="M1563.500 214h27v45h-27zM1600.500 214h27v45h-27z" fill="none" stroke="#5c88a8" stroke-dasharray="1 4"/>
<use href="#mst" x="1559" y="271"/><path d="M1563.500 288h27v32h-27zM1600.500 288h27v32h-27z" fill="none" stroke="#5c88a8" stroke-dasharray="1 4"/>
<path d="M1646 147l4-3 4 3" class="di" style="stroke:#5e5e5e"/><rect x="1645" y="187" width="11" height="129" rx="5.500" fill="#4a4a4a"/><path d="M1646 321l4 3 4-3" class="di" style="stroke:#5e5e5e"/>
<rect x="1332" y="330" width="325" height="2" fill="#3c3c3c"/>
<path d="M1646 343l4-3 4 3" class="di" style="stroke:#5e5e5e"/><rect x="1645" y="368" width="11" height="24" rx="5.500" fill="#4a4a4a"/>
<path d="M1646 702l4 3 4-3" class="di" style="stroke:#5e5e5e"/>
<path d="M1488.500 334v363" stroke="#9a9a9a"/>

<!-- spread 18-19 -->
<g transform="translate(1452,340)"><use href="#spr"/>
<path d="M13 4h18M11 9h20M4 17h11M4 25h28M4 33h20M4 41h15M4 47h28M41 9h22M41 14h28M41 21h28M41 26h28M41 33h28M41 40h28" stroke="#111" stroke-width="2"/>
<path d="M11 6.500h20M13 12h18M4 21h28M4 29h28M4 37h28M4 44h25M41 5h10M41 17.500h28M41 23.500h28M41 29.500h28M41 36.500h28M41 43.500h28M41 48h28" stroke="#707070" stroke-width="2.200"/>
<text class="ltr" x="1" y="10">A</text><text class="ltr" x="62" y="10">A</text></g>
<text class="tl" x="1486" y="411">18-19</text>
<!-- spread 20-21 -->
<g transform="translate(1452,423)"><use href="#spr"/><rect x="1" y="1" width="35" height="52" fill="#90c0f0"/><rect x="1" y="1" width="10" height="10" fill="#fff"/>
<path d="M12 4h19M12 7h19M12 12h15M4 19h28M4 24h24M4 29h28M4 34h20M4 40h28M4 45h28M4 50h15" stroke="#2e6ea8" stroke-width="1.800"/>
<path d="M4 15h28M4 22h28M4 27h28M4 32h28M4 37h22" stroke="#4d8cc4" stroke-width="1.800"/>
<path d="M41 4h22M41 9h12M41 14h10M41 34h12M41 40h20M41 46h14" stroke="#222" stroke-width="2"/>
<path d="M41 12h16M41 18h16M41 22h16M41 27h14M41 31h18M41 37h28M41 43h25" stroke="#808080" stroke-width="2.200"/>
<text class="ltr" x="1" y="10">C</text><text class="ltr" x="62" y="10">C</text></g>
<rect x="1469" y="483" width="35" height="14" fill="#2d8ceb"/><text x="1486.500" y="494" text-anchor="middle" style="font-size:10.500px;font-weight:bold;fill:#fff">20-21</text>
<!-- spread 22-23 -->
<g transform="translate(1452,506)"><use href="#spr"/>
<path d="M18 11l3 4h-6zM17 15l4 3-5 2zM13 21h8" fill="none" stroke="#666" stroke-width=".8"/>
<path d="M41 8h6M41 15h28M41 20h8M41 25h28M41 31h28M41 37h18M41 45h28" stroke="#111" stroke-width="2"/>
<path d="M41 12.500h28M41 18h28M41 23h14M41 28h28M41 34h28M41 42h28M41 49h10" stroke="#707070" stroke-width="2.200"/>
<text class="ltr" x="1" y="10">B</text><text class="ltr" x="62" y="10">A</text></g>
<text class="tl" x="1486" y="577">22-23</text>
<!-- spread 24-25 -->
<g transform="translate(1452,589)"><use href="#spr"/>
<path d="M13 4h18M4 14h28M4 19h28M4 25h28M4 35h28M5 40h8M5 45h10M41 12h20M41 16h8M41 25h28M41 32h14M41 43h28" stroke="#111" stroke-width="2"/>
<path d="M13 8h18M4 11h28M4 22h28M4 29h20M4 32h28M4 38h14M4 43h20M41 5h28M41 9h20M41 20h28M41 28h28M41 36h28M41 40h20M41 47h28" stroke="#707070" stroke-width="2.200"/>
<text class="ltr" x="1" y="10">A</text><text class="ltr" x="62" y="10">A</text></g>
<text class="tl" x="1486" y="660.500">24-25</text>
<!-- spread 26-27 clipped -->
<defs><clipPath id="c5"><rect x="1452" y="672" width="73" height="25"/></clipPath></defs>
<g clip-path="url(#c5)"><g transform="translate(1452,672)"><use href="#spr"/>
<path d="M11 4h20M4 14h28M4 21h28M41 14h24M41 21h28" stroke="#111" stroke-width="2"/>
<path d="M4 10h28M4 18h28M41 5h28M41 10h28M41 18h24" stroke="#707070" stroke-width="2.200"/>
<text class="ltr" x="1" y="10">A</text><text class="ltr" x="62" y="10">A</text></g></g>
<rect x="1332" y="709" width="325" height="1" fill="#282828"/>
<text class="pn" x="1337" y="727">236 Seiten auf 119 Druckbögen</text>
<path class="ic" d="M1563.500 727v-6l5-3v-2h5l3.500 3.500v7.500zM1573 716v4h4"/><path d="M1579 727h2" stroke="#b2b2b2"/>
<path class="ic" d="M1595.500 716.500h10v10.500h-10zM1598 722h5M1600.500 719.500v5" />
<path class="ic" d="M1624 720v8h7v-8M1622 718.500h11M1626 717h3M1626.500 721v5M1628.500 721v5" style="stroke:#9a9a9a"/>

<!-- red ellipses -->
<ellipse cx="1358" cy="285.500" rx="65.500" ry="38" fill="none" stroke="#c8202c" stroke-width="2.500"/>
<ellipse cx="1497" cy="456.500" rx="83" ry="47.500" fill="none" stroke="#c8202c" stroke-width="3"/>

<!-- dock -->
<rect x="1659" y="110" width="199" height="970" fill="#323232"/>
<path d="M1659 289.500h199M1659 470.500h199M1659 539.500h199M1659 580.500h199M1659 621.500h199" stroke="#222"/>
<g stroke="#5a5a5a" stroke-width="3" stroke-dasharray="1 1"><path d="M1748 114h20M1748 295h20M1748 476h20M1748 545h20M1748 586h20"/></g>
<rect x="1663" y="233" width="189" height="22" rx="3" fill="#1f1f1f"/>
<g class="dk"><text x="1696" y="137">Ebenen</text><text x="1696" y="165">Farbe</text><text x="1696" y="193">Farbfelder</text><text x="1696" y="221">Verlauf</text><text x="1696" y="249">Seiten</text><text x="1696" y="277">Preflight</text><text x="1696" y="318">Zeichenformate</text><text x="1696" y="346">Absatz</text><text x="1696" y="374">Objektformate</text><text x="1696" y="402">Glyphen</text><text x="1696" y="430">Zeichen</text><text x="1696" y="458">Verknüpfungen</text><text x="1696" y="499">Kontur</text><text x="1696" y="527">CC Libraries</text><text x="1696" y="568">Textumfluss</text><text x="1696" y="609">Tabelle</text></g>
<path class="if" transform="translate(0,1)" d="M1670 129l8.500-5 8.500 5-8.500 5zM1670 133l8.500 5 8.500-5v2l-8.500 5-8.500-5z"/>
<g transform="translate(0,2)"><path class="if" d="M1669 161c0-5 6-8 11-8s8 2 8 5c0 2-3 2-5 2-2 0-3 1-2 3 0 2-3 3-5 3-4 0-7-2-7-5z"/><circle cx="1673" cy="161" r="1.500" fill="#323232"/><circle cx="1677" cy="157" r="1.500" fill="#323232"/><circle cx="1682" cy="156.500" r="1.500" fill="#323232"/><circle cx="1677" cy="164" r="1.500" fill="#323232"/></g>
<g transform="translate(0,3)"><rect x="1670.500" y="181.500" width="15" height="9" fill="none" stroke="#aaa"/><path class="if" d="M1671 182h4v3h-4zM1676 182h4v3h-4zM1681 182h4v3h-4zM1671 186h4v4h-4zM1676 186h4v4h-4zM1681 186h4v4h-4z" style="fill:#6e6e6e"/></g>
<rect x="1670.500" y="211.500" width="16" height="11" fill="url(#gr)" stroke="#bbb"/>
<g transform="translate(0,5)"><path class="if" d="M1670 236l7-4v11h-7zM1680 232l7 4v7h-7z"/><path d="M1678.500 229v19" stroke="#d0d0d0"/></g>
<g transform="translate(0,6)"><path class="if" d="M1671 256h9l5 5-2 3-5 6-7 1z"/><path d="M1672 262l2 2 3-4M1672 266l1 1 2-2" stroke="#323232" fill="none"/><path d="M1678 272l7-7 2 2-7 7z" fill="#9a9a9a"/></g>
<g transform="translate(0,7)"><path class="ic" d="M1671 309.500h5v5h-5zM1674 313.500h5v5h-5z"/><text x="1682" y="312" text-anchor="middle" style="font-size:13px;fill:#b4b4b4">A</text></g>
<g transform="translate(0,8)"><path class="if" d="M1672 331h6v9h-2c-3 0-5-2-5-4s1-4 1-5z"/><path d="M1678 328h4v20" stroke="#aaa" fill="none"/></g>
<g transform="translate(0,9)"><path class="ic" d="M1671 357c2 0 3-1 3-2 1 0 9 0 11 0 0 2 1 3 2 3v8l-2 2h-10M1671 361h6v6h-6zM1674 365h6v5h-6z"/></g>
<text x="1678" y="404" text-anchor="middle" style="font-family:'Liberation Serif',serif;font-style:italic;font-size:18px;fill:#a0a0a0">A</text>
<g transform="translate(0,11)"><text x="1676" y="422" text-anchor="middle" style="font-size:16px;fill:#b4b4b4">A</text><path d="M1685.500 408v15" stroke="#b4b4b4"/></g>
<g transform="translate(0,11)"><rect x="1670" y="437" width="11" height="7" rx="3.500" fill="none" stroke="#b2b2b2" stroke-width="1.500"/><rect x="1677" y="437" width="11" height="7" rx="3.500" fill="none" stroke="#b2b2b2" stroke-width="1.500"/></g>
<g transform="translate(0,13)"><path d="M1670 476.500h17M1670 481.500h17" stroke="#b4b4b4" stroke-width="1.300"/><path d="M1670 486h17" stroke="#b4b4b4" stroke-width="2.200"/></g>
<g transform="translate(0,14)"><path class="ic" d="M1671 503.500h3v11h11v3h-14zM1674 501.500h12v13h-12z"/><path d="M1678 503h5v7l-2.500-2-2.500 2z" fill="#c0c0c0"/></g>
<g transform="translate(0,15)"><path d="M1670 543.500h6M1681 543.500h6M1670 547.500h4M1683 547.500h4M1670 551.500h4M1683 551.500h4M1670 555.500h17" stroke="#a8a8a8"/><circle cx="1678.500" cy="549" r="4" fill="#bbb"/></g>
<g transform="translate(0,16)"><path class="ic" d="M1671.500 581.500h15v12h-15zM1671.500 585.500h15M1671.500 589.500h15M1676.500 581.500v12" style="stroke-width:1"/></g>
</svg>
</body></html>
